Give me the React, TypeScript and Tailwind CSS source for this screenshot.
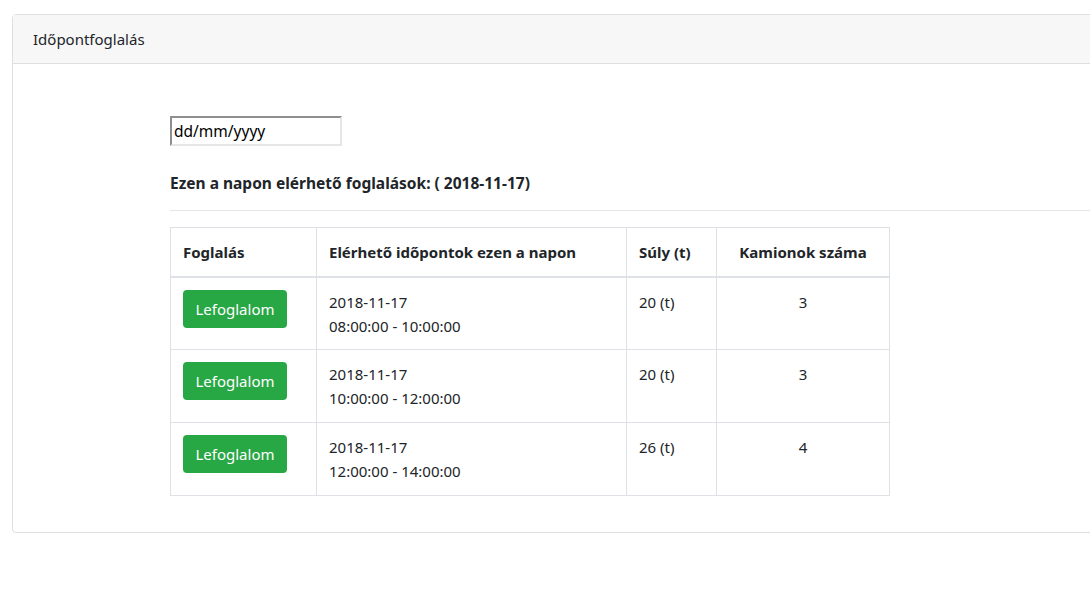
const rows = [
  { date: '2018-11-17', time: '08:00:00 - 10:00:00', weight: '20 (t)', trucks: 3 },
  { date: '2018-11-17', time: '10:00:00 - 12:00:00', weight: '20 (t)', trucks: 3 },
  { date: '2018-11-17', time: '12:00:00 - 14:00:00', weight: '26 (t)', trucks: 4 },
]

export default function App() {
  return (
    <div className="w-[1090px] h-[592px] overflow-hidden bg-white text-[#212529] font-['Noto_Sans',sans-serif] text-[15px] leading-6">
      <div className="pt-[14px] pl-[12px]">
        <div className="w-[1120px] border border-[#dfdfdf] rounded-[4px]">
          {/* card header */}
          <div className="bg-[#f7f7f7] border-b border-[#dfdfdf] px-5 py-3 h-[49px]">
            Időpontfoglalás
          </div>

          {/* card body */}
          <div className="pt-[52px] pb-[36px] pl-[157px]">
            <input
              type="text"
              placeholder="dd/mm/yyyy"
              className="block w-[172px] h-[30px] px-[2px] border-2 border-t-[#8f8f8f] border-l-[#8f8f8f] border-b-[#e6e6e6] border-r-[#e6e6e6] text-[15.5px] text-black placeholder:text-black outline-none"
            />

            <h5 className="mt-[25px] font-bold text-[15.5px] leading-6">
              Ezen a napon elérhető foglalások: ( 2018-11-17)
            </h5>

            <hr className="mt-[15px] mb-[16px] border-t border-[#e5e5e5]" />

            <table className="w-[720px] border-collapse border border-[#dee2e6]">
              <thead>
                <tr className="h-[49px] border-b-2 border-[#dee2e6] font-bold">
                  <th className="w-[146px] border border-[#dee2e6] px-3 text-left">Foglalás</th>
                  <th className="w-[310px] border border-[#dee2e6] px-3 text-left">Elérhető időpontok ezen a napon</th>
                  <th className="w-[90px] border border-[#dee2e6] px-3 text-left">Súly (t)</th>
                  <th className="border border-[#dee2e6] px-3 text-center">Kamionok száma</th>
                </tr>
              </thead>
              <tbody>
                {rows.map((r, i) => (
                  <tr key={i} className="h-[73px]">
                    <td className="border border-[#dee2e6] px-3 pt-3 align-top">
                      <button className="h-[38px] w-[104px] rounded-[4px] bg-[#28a745] text-white text-[15px]">
                        Lefoglalom
                      </button>
                    </td>
                    <td className="border border-[#dee2e6] px-3 pt-3 align-top">
                      <div>{r.date}</div>
                      <div>{r.time}</div>
                    </td>
                    <td className="border border-[#dee2e6] px-3 pt-3 align-top">{r.weight}</td>
                    <td className="border border-[#dee2e6] px-3 pt-3 align-top text-center">{r.trucks}</td>
                  </tr>
                ))}
              </tbody>
            </table>
          </div>
        </div>
      </div>
    </div>
  )
}
